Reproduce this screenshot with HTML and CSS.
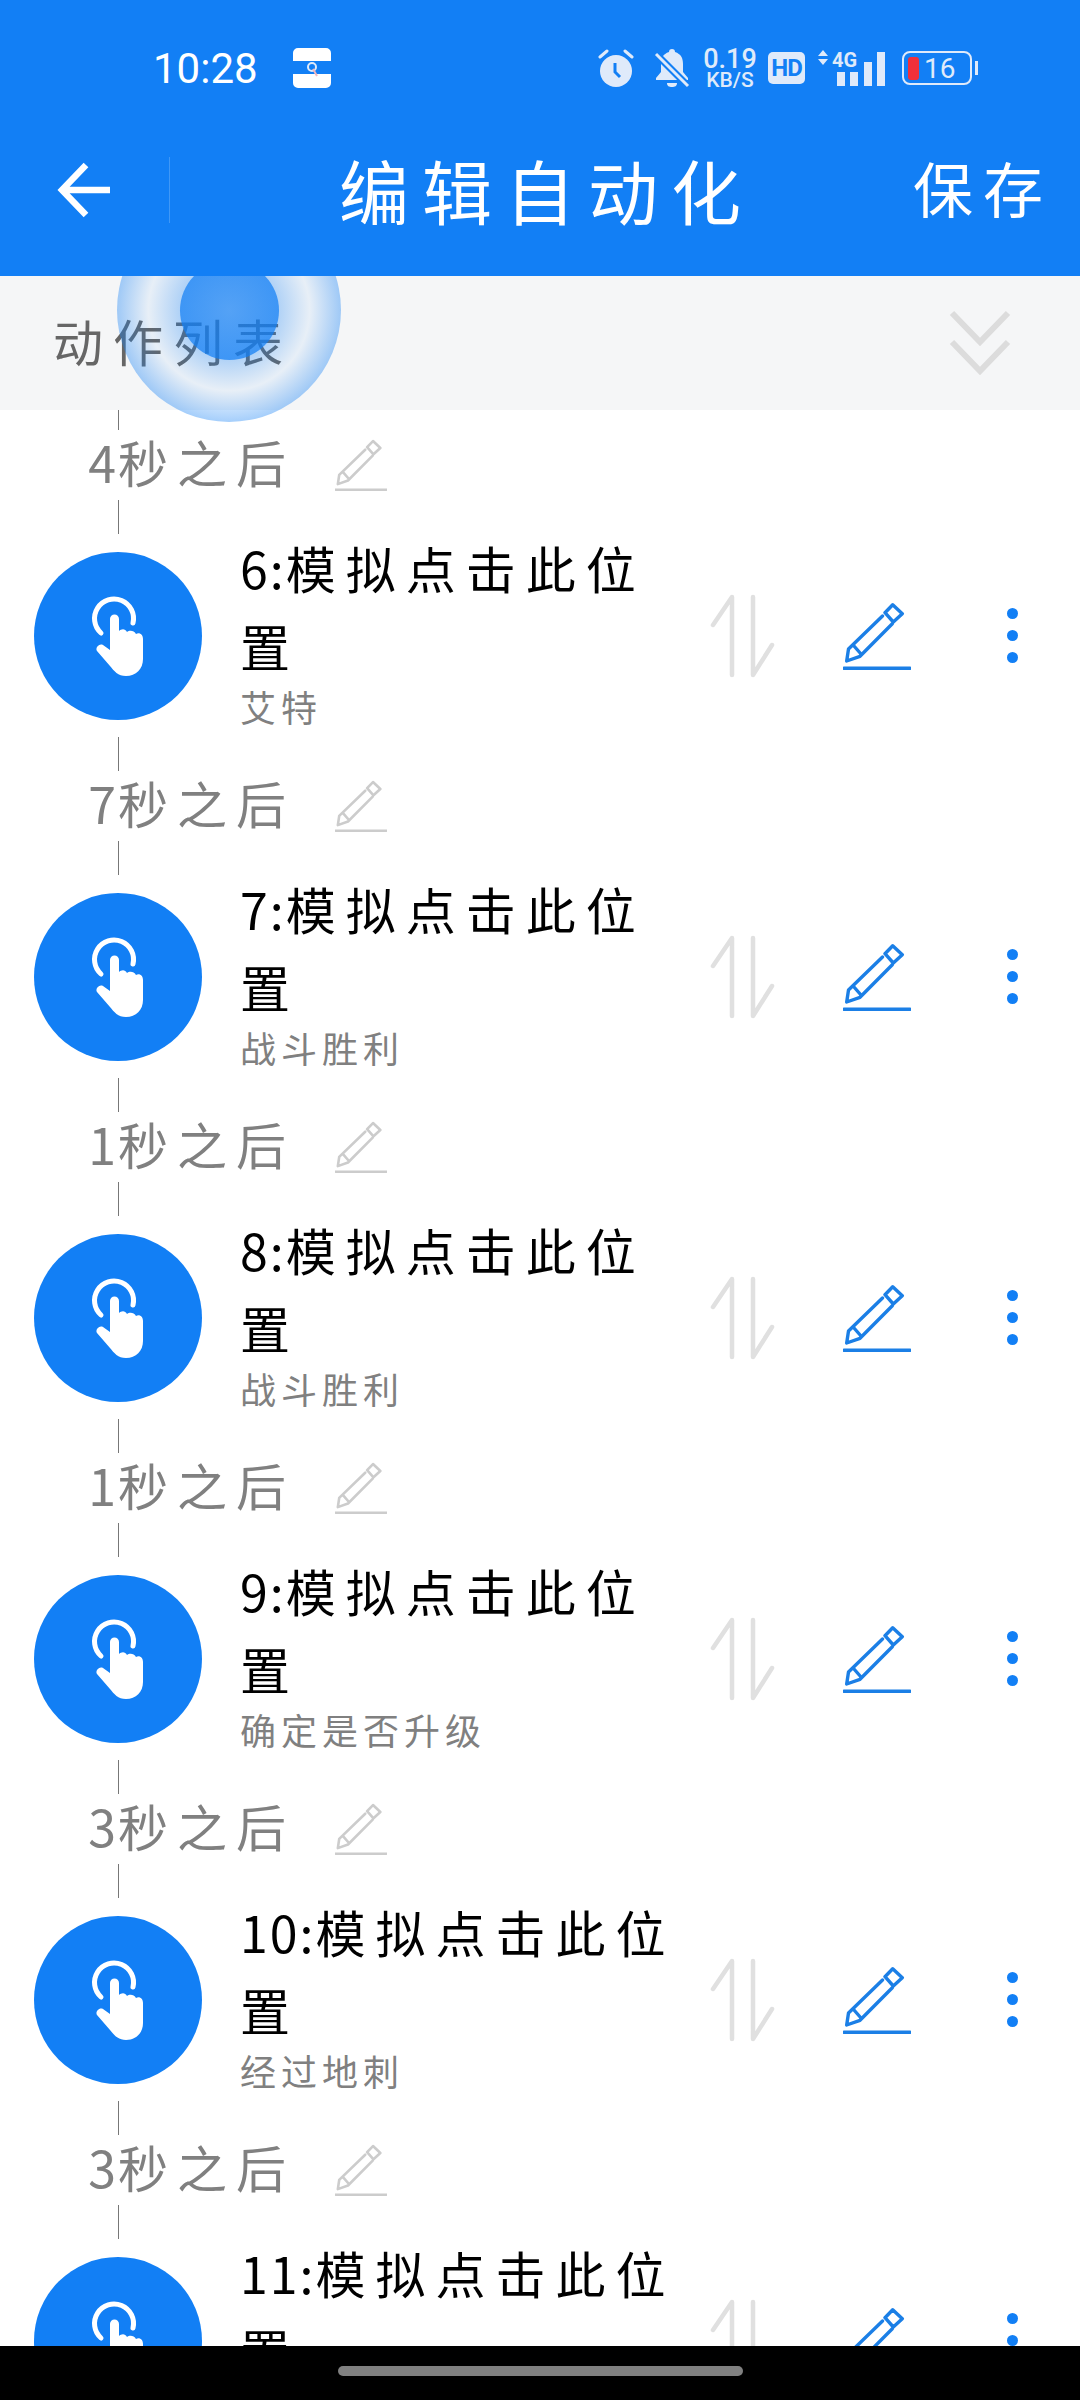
FILE: index.html
```html
<!DOCTYPE html>
<html lang="zh-CN">
<head>
    <meta charset="UTF-8">
    <meta name="viewport" content="width=device-width, initial-scale=1.0">
    <title>编辑自动化</title>
    <link rel="stylesheet" href="styles.css">
</head>
<body>
    <svg class="sprite" width="0" height="0">
        <symbol id="pencil" viewBox="0 0 68 68">
            <path d="M39.5 14 5.5 47 3.7 59 17 54.3 49.3 21.7M11 44l7 8M49.7 2.7l9.6 9-9 8.3-8.3-9.3zM1 66.3h66" fill="none" stroke="currentColor" stroke-width="3.4" stroke-linecap="round" stroke-linejoin="round"/>
        </symbol>
        <symbol id="swap" viewBox="0 0 66 84">
            <path d="M22 81V3L3 31M43 3V81L62 51" fill="none" stroke="#e0e0e0" stroke-width="4.5" stroke-linecap="round" stroke-linejoin="round"/>
        </symbol>
        <symbol id="hand" viewBox="0 0 54 82">
            <path d="M10 38A19.5 19.5 0 1 1 42 28" fill="none" stroke="#fff" stroke-width="5" stroke-linecap="round"/>
            <path d="M19 24A4.5 4.5 0 0 1 28 24V36C30 34 34 33 36 37 38 35 43 35 45 39 48 37 52 39 52 44V64C52 74 45 81 35 81 27 81 23 76 19 71L6 56C4 53 8 48 12 50L19 55Z" fill="#fff"/>
        </symbol>
    </svg>

    <div class="app">
        <header class="appbar">
            <div class="statusbar">
                <span class="clock">10:28</span>
                <svg class="app-icon" width="40" height="42" viewBox="0 0 40 42">
                    <path d="M6 1h28a5 5 0 0 1 5 5v8H1V6a5 5 0 0 1 5-5zM1 27h38v9a5 5 0 0 1-5 5H6a5 5 0 0 1-5-5z" fill="#fff"/>
                    <circle cx="20" cy="20" r="4" fill="none" stroke="#dfeafa" stroke-width="2"/>
                    <path d="M21 22l4 7" stroke="#f0b8c0" stroke-width="2"/>
                </svg>
                <div class="status-right">
                    <svg width="36" height="40" viewBox="0 0 36 40">
                        <circle cx="18" cy="23" r="16" fill="#dfeafa"/>
                        <path d="M2 9l7-6M34 9l-7-6" stroke="#dfeafa" stroke-width="3" stroke-linecap="round"/>
                        <path d="M17 15v9l5 5" fill="none" stroke="#127ff5" stroke-width="3"/>
                    </svg>
                    <svg class="bell" width="36" height="40" viewBox="0 0 36 40">
                        <path d="M18 1c2 0 3 1 3 3 6 2 8 6 8 12v8l5 6v2H2v-2l5-6v-8c0-6 2-10 8-12 0-2 1-3 3-3zM13 35h10c0 3-2 4-5 4s-5-1-5-4z" fill="#dfeafa"/>
                        <path d="M2 6l32 32" stroke="#127ff5" stroke-width="7"/>
                        <path d="M2 6l32 32" stroke="#dfeafa" stroke-width="3"/>
                    </svg>
                    <div class="speed"><b>0.19</b><small>KB/S</small></div>
                    <span class="hd">HD</span>
                    <svg class="signal" width="68" height="38" viewBox="0 0 68 38">
                        <path d="M6 1l5 6H1zM6 16l5-6H1z" fill="#dfeafa"/>
                        <text x="15" y="18" class="net">4G</text>
                        <path d="M20 23h8v14h-8zM33 23h8v14h-8zM47 13h8v24h-8zM60 3h8v34h-8z" fill="#dfeafa"/>
                    </svg>
                    <div class="battery">
                        <span class="battery-level"></span>
                        <span class="battery-num">16</span>
                    </div>
                </div>
            </div>
            <div class="toolbar">
                <svg class="back" width="54" height="56" viewBox="0 0 54 56">
                    <path d="M53 28H6M29 3 5 28l24 25" fill="none" stroke="#fff" stroke-width="6.5"/>
                </svg>
                <span class="toolbar-divider"></span>
                <h1 class="title">编辑自动化</h1>
                <span class="save">保存</span>
            </div>
        </header>

        <main class="page">
            <div class="section">
                <span class="section-name">动作列表</span>
                <svg width="64" height="68" viewBox="0 0 64 68">
                    <path d="M4 4 32 33 60 4M4 33 32 62 60 33" fill="none" stroke="#dcdcdc" stroke-width="6"/>
                </svg>
            </div>

            <div class="list">
                <div class="connector connector-first"></div>
                <div class="delay"><span class="delay-text"><span class="num">4</span>秒之后</span><svg class="delay-edit"><use href="#pencil"/></svg></div>
                <div class="connector"></div>
                <div class="action">
                    <div class="action-circle"><svg width="54" height="82"><use href="#hand"/></svg></div>
                    <div class="action-text"><div class="action-title"><span class="num">6:</span>模拟点击此位<br>置</div><div class="action-sub">艾特</div></div>
                    <svg class="swap"><use href="#swap"/></svg>
                    <svg class="edit"><use href="#pencil"/></svg>
                    <div class="more"><i></i><i></i><i></i></div>
                </div>

                <div class="connector"></div>
                <div class="delay"><span class="delay-text"><span class="num">7</span>秒之后</span><svg class="delay-edit"><use href="#pencil"/></svg></div>
                <div class="connector"></div>
                <div class="action">
                    <div class="action-circle"><svg width="54" height="82"><use href="#hand"/></svg></div>
                    <div class="action-text"><div class="action-title"><span class="num">7:</span>模拟点击此位<br>置</div><div class="action-sub">战斗胜利</div></div>
                    <svg class="swap"><use href="#swap"/></svg>
                    <svg class="edit"><use href="#pencil"/></svg>
                    <div class="more"><i></i><i></i><i></i></div>
                </div>

                <div class="connector"></div>
                <div class="delay"><span class="delay-text"><span class="num">1</span>秒之后</span><svg class="delay-edit"><use href="#pencil"/></svg></div>
                <div class="connector"></div>
                <div class="action">
                    <div class="action-circle"><svg width="54" height="82"><use href="#hand"/></svg></div>
                    <div class="action-text"><div class="action-title"><span class="num">8:</span>模拟点击此位<br>置</div><div class="action-sub">战斗胜利</div></div>
                    <svg class="swap"><use href="#swap"/></svg>
                    <svg class="edit"><use href="#pencil"/></svg>
                    <div class="more"><i></i><i></i><i></i></div>
                </div>

                <div class="connector"></div>
                <div class="delay"><span class="delay-text"><span class="num">1</span>秒之后</span><svg class="delay-edit"><use href="#pencil"/></svg></div>
                <div class="connector"></div>
                <div class="action">
                    <div class="action-circle"><svg width="54" height="82"><use href="#hand"/></svg></div>
                    <div class="action-text"><div class="action-title"><span class="num">9:</span>模拟点击此位<br>置</div><div class="action-sub">确定是否升级</div></div>
                    <svg class="swap"><use href="#swap"/></svg>
                    <svg class="edit"><use href="#pencil"/></svg>
                    <div class="more"><i></i><i></i><i></i></div>
                </div>

                <div class="connector"></div>
                <div class="delay"><span class="delay-text"><span class="num">3</span>秒之后</span><svg class="delay-edit"><use href="#pencil"/></svg></div>
                <div class="connector"></div>
                <div class="action">
                    <div class="action-circle"><svg width="54" height="82"><use href="#hand"/></svg></div>
                    <div class="action-text"><div class="action-title"><span class="num">10:</span>模拟点击此位<br>置</div><div class="action-sub">经过地刺</div></div>
                    <svg class="swap"><use href="#swap"/></svg>
                    <svg class="edit"><use href="#pencil"/></svg>
                    <div class="more"><i></i><i></i><i></i></div>
                </div>

                <div class="connector"></div>
                <div class="delay"><span class="delay-text"><span class="num">3</span>秒之后</span><svg class="delay-edit"><use href="#pencil"/></svg></div>
                <div class="connector"></div>
                <div class="action">
                    <div class="action-circle"><svg width="54" height="82"><use href="#hand"/></svg></div>
                    <div class="action-text"><div class="action-title"><span class="num">11:</span>模拟点击此位<br>置</div></div>
                    <svg class="swap"><use href="#swap"/></svg>
                    <svg class="edit"><use href="#pencil"/></svg>
                    <div class="more"><i></i><i></i><i></i></div>
                </div>
            </div>

            <div class="ripple"><div class="ripple-core"></div></div>
        </main>

        <div class="navbar"><span class="nav-pill"></span></div>
    </div>
</body>
</html>
```

FILE: styles.css
```css
body {
    margin: 0;
    background-color: #fff;
    font-family: "Noto Sans CJK SC", "Noto Sans", sans-serif;
}

.sprite {
    position: absolute;
}

.app {
    display: flex;
    flex-direction: column;
    width: 1080px;
    height: 2400px;
    overflow: hidden;
}

/* blue header */
.appbar {
    position: relative;
    z-index: 2;
    flex: none;
    height: 276px;
    background-color: #127ff5;
    color: #fff;
}

.statusbar {
    display: flex;
    align-items: center;
    box-sizing: border-box;
    height: 104px;
    padding: 32px 0 0 153px;
}

.clock {
    width: 139px;
    font-family: Roboto, sans-serif;
    font-size: 42px;
}

.app-icon {
    flex: none;
}

.status-right {
    display: flex;
    align-items: center;
    margin-left: 266px;
}

.bell {
    margin-left: 20px;
}

.speed {
    display: flex;
    flex-direction: column;
    align-items: center;
    width: 50px;
    margin-left: 15px;
    font-family: Roboto, sans-serif;
    color: #dfeafa;
}

.speed b {
    font-size: 27px;
    font-weight: 500;
    line-height: 23px;
}

.speed small {
    font-size: 21px;
    font-weight: 500;
    line-height: 18px;
}

.hd {
    width: 37px;
    height: 32px;
    margin-left: 13px;
    border-radius: 5px;
    background-color: #dfeafa;
    color: #127ff5;
    font-family: Roboto, sans-serif;
    font-size: 24px;
    font-weight: 700;
    line-height: 32px;
    text-align: center;
    letter-spacing: -1px;
}

.signal {
    margin-left: 12px;
}

.net {
    font-family: Roboto, sans-serif;
    font-size: 20px;
    font-weight: 700;
    fill: #dfeafa;
}

.battery {
    position: relative;
    display: flex;
    align-items: center;
    box-sizing: border-box;
    width: 70px;
    height: 34px;
    margin-left: 17px;
    padding-left: 4px;
    border: 2px solid #dfeafa;
    border-radius: 8px;
}

.battery::after {
    content: "";
    position: absolute;
    right: -8px;
    top: 8px;
    width: 3px;
    height: 14px;
    background-color: #dfeafa;
}

.battery-level {
    width: 11px;
    height: 23px;
    border-radius: 3px;
    background-color: #f0303a;
}

.battery-num {
    margin-left: 5px;
    font-family: Roboto, sans-serif;
    font-size: 28px;
    color: #dfeafa;
}

.toolbar {
    display: flex;
    align-items: center;
    height: 172px;
    padding-left: 57px;
}

.back {
    flex: none;
}

.toolbar-divider {
    width: 1px;
    height: 66px;
    margin-left: 58px;
    background-color: #3f98f7;
}

.title {
    width: 574px;
    margin: 0 0 0 169px;
    font-size: 70px;
    font-weight: 400;
    letter-spacing: 13px;
    line-height: 1;
}

.save {
    margin-bottom: 6px;
    font-size: 60px;
    letter-spacing: 10px;
    line-height: 1;
}

/* list */
.page {
    position: relative;
    flex: 1;
    min-height: 0;
    overflow: hidden;
}

.section {
    display: flex;
    align-items: center;
    justify-content: space-between;
    height: 134px;
    padding: 0 68px 0 53px;
    background-color: #f5f6f7;
}

.section-name {
    margin-bottom: 6px;
    font-size: 50px;
    letter-spacing: 10px;
    color: #666;
}

.ripple {
    position: absolute;
    left: 117px;
    top: -78px;
    display: flex;
    align-items: center;
    justify-content: center;
    width: 224px;
    height: 224px;
    border-radius: 50%;
    background: radial-gradient(circle closest-side, rgba(18, 127, 245, 0.3) 44%, rgba(18, 127, 245, 0.06) 72%, rgba(18, 127, 245, 0.38) 100%);
}

.ripple-core {
    width: 99px;
    height: 99px;
    border-radius: 50%;
    background: radial-gradient(circle closest-side, rgba(18, 127, 245, 0.58), rgba(18, 127, 245, 0.72));
}

.connector {
    width: 1px;
    height: 34px;
    margin-left: 118px;
    background-color: #777;
}

.connector-first {
    height: 20px;
}

.delay {
    display: flex;
    align-items: center;
    height: 70px;
}

.delay-text {
    width: 295px;
    margin-bottom: 8px;
    font-size: 50px;
    letter-spacing: 9px;
    line-height: 70px;
    text-align: right;
    color: #808080;
}

.num {
    letter-spacing: 2px;
}

.delay-edit {
    width: 52px;
    height: 52px;
    margin-left: 40px;
    color: #ccc;
}

.action {
    position: relative;
    display: flex;
    align-items: center;
    height: 203px;
    padding-left: 34px;
}

.action-circle {
    display: flex;
    flex: none;
    align-items: center;
    justify-content: center;
    width: 168px;
    height: 168px;
    border-radius: 50%;
    background-color: #127ff5;
}

.action-text {
    flex: none;
    align-self: flex-start;
    width: 450px;
    margin: -6px 0 0 38px;
}

.action-title {
    font-size: 50px;
    letter-spacing: 10px;
    line-height: 78px;
    color: #000;
}

.action-sub {
    margin-top: 1px;
    font-size: 36px;
    letter-spacing: 5px;
    line-height: 42px;
    color: #808080;
}

.swap {
    flex: none;
    width: 66px;
    height: 84px;
    margin-left: 20px;
}

.edit {
    flex: none;
    width: 68px;
    height: 68px;
    margin-left: 67px;
    color: #1b7fe6;
}

.more {
    display: flex;
    flex-direction: column;
    gap: 11px;
    margin-left: 96px;
}

.more i {
    width: 11px;
    height: 11px;
    border-radius: 50%;
    background-color: #127ff5;
}

.navbar {
    display: flex;
    flex: none;
    justify-content: center;
    height: 54px;
    padding-top: 20px;
    box-sizing: border-box;
    background-color: #000;
}

.nav-pill {
    width: 405px;
    height: 10px;
    border-radius: 5px;
    background-color: #808080;
}
```
